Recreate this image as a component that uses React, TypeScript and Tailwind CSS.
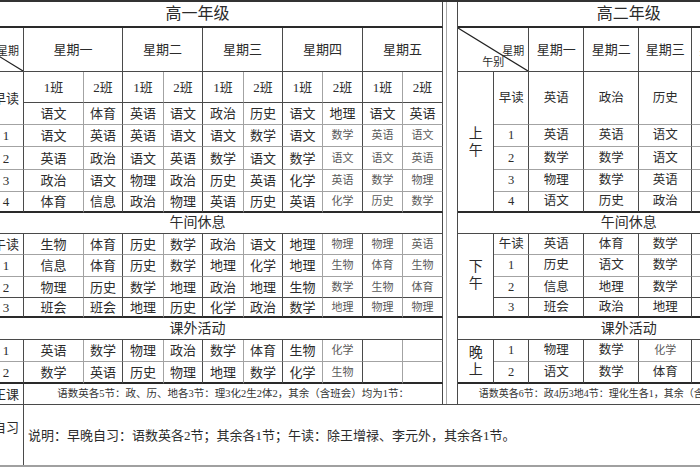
import React from 'react';

const B = {
  g: 'border-b border-b-[#a3a3a3]',
  d: 'border-b border-b-[#4a4a4a]',
  t: 'border-b-2 border-b-[#2a2a2a]',
  n: 'border-b-0',
} as const;
type BK = keyof typeof B;

const RD = 'border-r border-r-[#4a4a4a]';
const RG = 'border-r border-r-[#a3a3a3]';
const base = 'p-0 text-center align-middle leading-none whitespace-nowrap overflow-hidden';

const DAYS = ['星期一', '星期二', '星期三', '星期四', '星期五'];
const T1_W = ['w-[60px]', 'w-[39px]', 'w-[41px]', 'w-[39px]', 'w-[41px]', 'w-[39px]', 'w-[40px]', 'w-[40px]', 'w-[40px]', 'w-[40px]'];
const T2_W = ['w-[55px]', 'w-[55px]', 'w-[53px]', 'w-[54px]', 'w-[54px]'];

const T1_ZAO = ['语文', '体育', '英语', '语文', '政治', '历史', '语文', '地理', '语文', '英语'];
const T1_AM = [
  ['语文', '英语', '英语', '语文', '语文', '数学', '语文', '数学', '英语', '语文'],
  ['英语', '政治', '语文', '英语', '数学', '语文', '数学', '语文', '语文', '英语'],
  ['政治', '语文', '物理', '政治', '历史', '英语', '化学', '英语', '数学', '物理'],
  ['体育', '信息', '政治', '物理', '英语', '历史', '英语', '化学', '历史', '数学'],
];
const T1_PM = [
  ['生物', '体育', '历史', '数学', '政治', '语文', '地理', '物理', '物理', '英语'],
  ['信息', '体育', '历史', '数学', '地理', '化学', '地理', '生物', '体育', '生物'],
  ['物理', '历史', '数学', '地理', '政治', '地理', '生物', '数学', '生物', '体育'],
  ['班会', '班会', '地理', '历史', '化学', '政治', '数学', '地理', '物理', '物理'],
];
const T1_EVE = [
  ['英语', '数学', '物理', '政治', '数学', '体育', '生物', '化学', '', ''],
  ['数学', '英语', '历史', '物理', '地理', '数学', '化学', '生物', '', ''],
];

const T2_ZAO = ['英语', '政治', '历史', '语文', '英语'];
const T2_AM = [
  ['英语', '英语', '语文', '数学', '化学'],
  ['数学', '数学', '语文', '英语', '物理'],
  ['物理', '数学', '英语', '语文', '数学'],
  ['语文', '历史', '政治', '化学', '英语'],
];
const T2_PM = [
  ['英语', '体育', '数学', '语文', '历史'],
  ['历史', '语文', '数学', '生物', '英语'],
  ['信息', '地理', '数学', '政治', '化学'],
  ['班会', '政治', '地理', '语文', '数学'],
];
const T2_EVE = [
  ['物理', '数学', '化学', '英语', '语文'],
  ['语文', '数学', '体育', '历史', '英语'],
];

const AM_ROWS: { h: string; b: BK }[] = [
  { h: 'h-[22px]', b: 'g' },
  { h: 'h-[23px]', b: 'g' },
  { h: 'h-[22px]', b: 'g' },
  { h: 'h-[21px]', b: 't' },
];
const PM_ROWS: { h: string; b: BK; label: string }[] = [
  { h: 'h-[21px]', b: 'g', label: '午读' },
  { h: 'h-[22px]', b: 'g', label: '1' },
  { h: 'h-[21px]', b: 'd', label: '2' },
  { h: 'h-[20px]', b: 't', label: '3' },
];
const EVE_ROWS: { h: string; b: BK }[] = [
  { h: 'h-[22px]', b: 'g' },
  { h: 'h-[22px]', b: 't' },
];

function VLabel({ a, b }: { a: string; b: string }) {
  return (
    <div className="flex flex-col items-center text-[14px] leading-[17px]">
      <span>{a}</span>
      <span>{b}</span>
    </div>
  );
}

function DiagCell() {
  return (
    <td colSpan={2} className={`relative p-0 ${RD} ${B.d}`}>
      <svg className="absolute inset-0 w-full h-full" viewBox="0 0 71 44" preserveAspectRatio="none">
        <line x1="0" y1="0" x2="71" y2="44" stroke="#222" strokeWidth="1.2" vectorEffect="non-scaling-stroke" />
      </svg>
      <span className="absolute right-[4px] top-[18px] text-[11px] leading-none">星期</span>
      <span className="absolute left-[24px] top-[29px] text-[11px] leading-none">午别</span>
    </td>
  );
}

function S1({ t, i, light, b }: { t: string; i: number; light: boolean; b: BK }) {
  return (
    <td className={`${base} ${i % 2 === 1 ? RD : RG} ${B[b]} ${light ? 'text-[11px] text-[#5a5a5a]' : 'text-[13px]'}`}>
      {t}
    </td>
  );
}

function S2({ t, light, b }: { t: string; light: boolean; b: BK }) {
  return (
    <td className={`${base} ${RD} ${B[b]} ${light ? 'text-[11px] text-[#5a5a5a]' : 'text-[12.5px]'}`}>{t}</td>
  );
}

function Table1() {
  return (
    <table className="table-fixed border-separate border-spacing-0 w-[490px] shrink-0 ml-[-47px]">
      <colgroup>
        <col className="w-[36px]" />
        <col className="w-[35px]" />
        {T1_W.map((w, i) => (
          <col key={i} className={w} />
        ))}
      </colgroup>
      <tbody>
        <tr className="h-[26px]">
          <td colSpan={12} className={`${base} ${RD} ${B.t} text-[16px]`}>
            高一年级
          </td>
        </tr>
        <tr className="h-[44px]">
          <DiagCell />
          {DAYS.map((d) => (
            <td key={d} colSpan={2} className={`${base} ${RD} ${B.d} text-[13px]`}>
              {d}
            </td>
          ))}
        </tr>
        <tr className="h-[31px]">
          <td rowSpan={6} className={`${base} ${RD} ${B.t}`}>
            <VLabel a="上" b="午" />
          </td>
          <td rowSpan={2} className={`${base} ${RD} ${B.g} text-[13px]`}>
            早读
          </td>
          {T1_W.map((_, i) => (
            <td key={i} className={`${base} ${i % 2 === 1 ? RD : RG} ${B.d} text-[13px]`}>
              {i % 2 === 0 ? '1班' : '2班'}
            </td>
          ))}
        </tr>
        <tr className="h-[22px]">
          {T1_ZAO.map((t, i) => (
            <S1 key={i} t={t} i={i} light={false} b="g" />
          ))}
        </tr>
        {T1_AM.map((row, r) => (
          <tr key={r} className={AM_ROWS[r].h}>
            <td className={`${base} ${RD} ${B[AM_ROWS[r].b]} text-[13px]`}>{r + 1}</td>
            {row.map((t, i) => (
              <S1 key={i} t={t} i={i} light={i >= 7} b={AM_ROWS[r].b} />
            ))}
          </tr>
        ))}
        <tr className="h-[21px]">
          <td colSpan={12} className={`${base} ${RD} ${B.d} text-[14px]`}>
            午间休息
          </td>
        </tr>
        {T1_PM.map((row, r) => (
          <tr key={r} className={PM_ROWS[r].h}>
            {r === 0 && (
              <td rowSpan={4} className={`${base} ${RD} ${B.t}`}>
                <VLabel a="下" b="午" />
              </td>
            )}
            <td className={`${base} ${RD} ${B[PM_ROWS[r].b]} text-[13px]`}>{PM_ROWS[r].label}</td>
            {row.map((t, i) => (
              <S1 key={i} t={t} i={i} light={i >= 7} b={PM_ROWS[r].b} />
            ))}
          </tr>
        ))}
        <tr className="h-[22px]">
          <td colSpan={12} className={`${base} ${RD} ${B.d} text-[14px]`}>
            课外活动
          </td>
        </tr>
        {T1_EVE.map((row, r) => (
          <tr key={r} className={EVE_ROWS[r].h}>
            {r === 0 && (
              <td rowSpan={2} className={`${base} ${RD} ${B.t}`}>
                <VLabel a="晚" b="上" />
              </td>
            )}
            <td className={`${base} ${RD} ${B[EVE_ROWS[r].b]} text-[13px]`}>{r + 1}</td>
            {row.map((t, i) => (
              <S1 key={i} t={t} i={i} light={i === 7} b={EVE_ROWS[r].b} />
            ))}
          </tr>
        ))}
        <tr className="h-[20px]">
          <td className={`${base} ${RD}`}></td>
          <td className={`${base} ${RD} text-[13px]`}>正课</td>
          <td colSpan={10} className={`${base} ${RD} text-[10.5px] text-[#333]`}>
            语数英各5节：政、历、地各3节：理3化2生2体2，其余（含班会）均为1节：
          </td>
        </tr>
      </tbody>
    </table>
  );
}

function Table2() {
  return (
    <table className="table-fixed border-separate border-spacing-0 w-[342px] shrink-0">
      <colgroup>
        <col className="w-[36px]" />
        <col className="w-[35px]" />
        {T2_W.map((w, i) => (
          <col key={i} className={w} />
        ))}
      </colgroup>
      <tbody>
        <tr className="h-[26px]">
          <td colSpan={7} className={`${base} ${RD} ${B.t} text-[16px]`}>
            高二年级
          </td>
        </tr>
        <tr className="h-[44px]">
          <DiagCell />
          {DAYS.map((d) => (
            <td key={d} className={`${base} ${RD} ${B.d} text-[13px]`}>
              {d}
            </td>
          ))}
        </tr>
        <tr className="h-[53px]">
          <td rowSpan={5} className={`${base} ${RD} ${B.t}`}>
            <VLabel a="上" b="午" />
          </td>
          <td className={`${base} ${RD} ${B.g} text-[12.5px]`}>早读</td>
          {T2_ZAO.map((t, i) => (
            <S2 key={i} t={t} light={false} b="g" />
          ))}
        </tr>
        {T2_AM.map((row, r) => (
          <tr key={r} className={AM_ROWS[r].h}>
            <td className={`${base} ${RD} ${B[AM_ROWS[r].b]} text-[12.5px]`}>{r + 1}</td>
            {row.map((t, i) => (
              <S2 key={i} t={t} light={false} b={AM_ROWS[r].b} />
            ))}
          </tr>
        ))}
        <tr className="h-[21px]">
          <td colSpan={7} className={`${base} ${RD} ${B.d} text-[14px]`}>
            午间休息
          </td>
        </tr>
        {T2_PM.map((row, r) => (
          <tr key={r} className={PM_ROWS[r].h}>
            {r === 0 && (
              <td rowSpan={4} className={`${base} ${RD} ${B.t}`}>
                <VLabel a="下" b="午" />
              </td>
            )}
            <td className={`${base} ${RD} ${B[PM_ROWS[r].b]} text-[12.5px]`}>{PM_ROWS[r].label}</td>
            {row.map((t, i) => (
              <S2 key={i} t={t} light={false} b={PM_ROWS[r].b} />
            ))}
          </tr>
        ))}
        <tr className="h-[22px]">
          <td colSpan={7} className={`${base} ${RD} ${B.d} text-[14px]`}>
            课外活动
          </td>
        </tr>
        {T2_EVE.map((row, r) => (
          <tr key={r} className={EVE_ROWS[r].h}>
            {r === 0 && (
              <td rowSpan={2} className={`${base} ${RD} ${B.t}`}>
                <VLabel a="晚" b="上" />
              </td>
            )}
            <td className={`${base} ${RD} ${B[EVE_ROWS[r].b]} text-[12.5px]`}>{r + 1}</td>
            {row.map((t, i) => (
              <S2 key={i} t={t} light={r === 0 && i === 2} b={EVE_ROWS[r].b} />
            ))}
          </tr>
        ))}
        <tr className="h-[20px]">
          <td colSpan={7} className={`${base} ${RD} text-[10px] text-[#333]`}>
            语数英各6节：政4历3地4节：理化生各1，其余（含班会）均为1节：
          </td>
        </tr>
      </tbody>
    </table>
  );
}

export default function App() {
  return (
    <div className="w-[700px] h-[470px] overflow-hidden bg-white border-t-2 border-t-[#333] font-['Liberation_Serif','Noto_Sans_CJK_SC',serif] text-[#2b2b2b]">
      <div className="flex items-start">
        <Table1 />
        <div className="w-[15px] h-[402px] shrink-0 flex border-r border-r-[#4a4a4a]">
          <div className="ml-[3px] w-px h-full bg-[#a8a8a8]" />
        </div>
        <Table2 />
      </div>
      <div className="flex h-[63px] border-t border-t-[#4a4a4a] border-b-2 border-b-[#a0a0a0]">
        <div className="w-[35px] ml-[-11px] shrink-0 border-r border-r-[#4a4a4a] flex justify-center pt-[16px] text-[13px] leading-none">
          自习
        </div>
        <div className="flex-1 flex items-center pl-[4px] text-[13px] whitespace-nowrap leading-none">
          说明：早晚自习：语数英各2节；其余各1节；午读：除王增禄、李元外，其余各1节。
        </div>
      </div>
    </div>
  );
}
